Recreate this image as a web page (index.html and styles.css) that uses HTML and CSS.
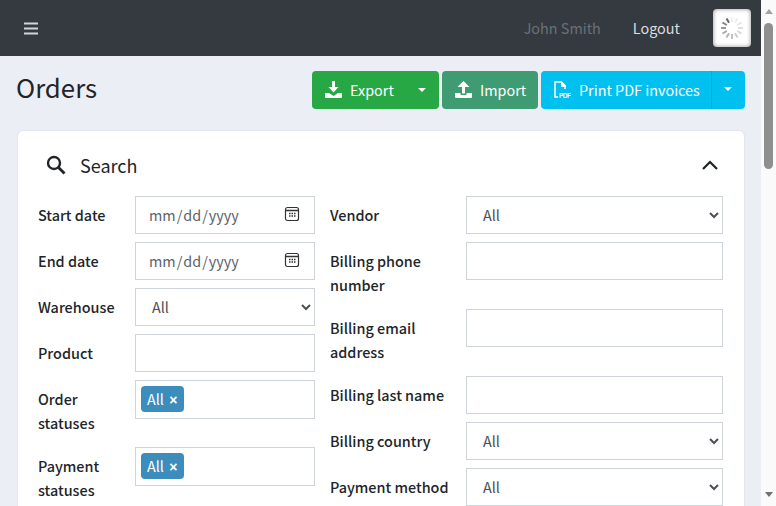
FILE: index.html
```html
<!DOCTYPE html>
<html lang="en">
<head>
    <meta charset="UTF-8">
    <meta name="viewport" content="width=device-width, initial-scale=1.0">
    <title>Orders</title>
    <link rel="stylesheet" href="styles.css">
</head>
<body>
    <div class="page">
        <nav class="navbar">
            <button class="nav-toggle" aria-label="Menu">
                <svg width="16" height="13" viewBox="0 0 16 13"><path d="M1 1.500h14M1 6.500h14M1 11.500h14" stroke="#d4d5d7" stroke-width="2"/></svg>
            </button>
            <span class="nav-user">John Smith</span>
            <a class="nav-logout" href="#">Logout</a>
            <div class="nav-spinner">
                <svg width="24" height="24" viewBox="0 0 24 24" stroke-width="2">
                    <line x1="12" y1="1" x2="12" y2="6" stroke="#f2f2f2"/>
                    <line x1="17.500" y1="2.500" x2="15" y2="6.800" stroke="#ededed"/>
                    <line x1="21.500" y1="6.500" x2="17.200" y2="9" stroke="#e6e6e6"/>
                    <line x1="23" y1="12" x2="18" y2="12" stroke="#dedede"/>
                    <line x1="21.500" y1="17.500" x2="17.200" y2="15" stroke="#d6d6d6"/>
                    <line x1="17.500" y1="21.500" x2="15" y2="17.200" stroke="#cccccc"/>
                    <line x1="12" y1="23" x2="12" y2="18" stroke="#c2c2c2"/>
                    <line x1="6.500" y1="21.500" x2="9" y2="17.200" stroke="#b5b5b5"/>
                    <line x1="2.500" y1="17.500" x2="6.800" y2="15" stroke="#a8a8a8"/>
                    <line x1="1" y1="12" x2="6" y2="12" stroke="#999999"/>
                    <line x1="2.500" y1="6.500" x2="6.800" y2="9" stroke="#808080"/>
                    <line x1="6.500" y1="2.500" x2="9" y2="6.800" stroke="#666666"/>
                </svg>
            </div>
        </nav>

        <main class="content">
            <div class="page-header">
                <h1>Orders</h1>
                <div class="page-actions">
                    <button class="btn btn-export">
                        <svg class="btn-icon" width="17" height="17" viewBox="0 0 17 17"><path fill="#fff" d="M7 0h3v6h3.500L8.500 11.500 3.500 6H7zM0 12h4l4.500 3 4.500-3h4v4a1 1 0 0 1-1 1H1a1 1 0 0 1-1-1z"/></svg>
                        Export
                        <span class="caret caret-export"></span>
                    </button>
                    <button class="btn btn-import">
                        <svg class="btn-icon" width="17" height="17" viewBox="0 0 17 17"><path fill="#fff" d="M8.500 0l6 6H10v6.500H7V6H2.500zM0 12h5.500v2h6v-2H17v4a1 1 0 0 1-1 1H1a1 1 0 0 1-1-1z"/></svg>
                        Import
                    </button>
                    <div class="btn-split">
                        <button class="btn btn-print">
                            <svg class="btn-icon" width="17" height="17" viewBox="0 0 17 17"><path fill="none" stroke="#fff" stroke-width="1.500" d="M1 10V1h6.500L11 4.500V8M1 10v6h3"/><path fill="#fff" d="M7 1h1l4 4v1H7z"/><text class="pdf-mark" x="5" y="16.500" textLength="12">PDF</text></svg>
                            Print PDF invoices
                        </button>
                        <button class="btn btn-print btn-print-caret" aria-label="More"><span class="caret"></span></button>
                    </div>
                </div>
            </div>

            <section class="card">
                <div class="card-head">
                    <svg width="20" height="20" viewBox="0 0 20 20"><circle cx="8" cy="8" r="6" fill="none" stroke="#212529" stroke-width="2.400"/><path d="M12.500 12.500l6 6" stroke="#212529" stroke-width="2.800"/></svg>
                    <h2>Search</h2>
                    <svg class="card-chevron" width="16" height="10" viewBox="0 0 16 10"><path d="M1 9l7-7 7 7" fill="none" stroke="#1d2124" stroke-width="2.200"/></svg>
                </div>
                <form class="search-form">
                    <div class="form-col">
                        <div class="form-row">
                            <label for="start-date">Start date</label>
                            <input type="date" id="start-date">
                        </div>
                        <div class="form-row">
                            <label for="end-date">End date</label>
                            <input type="date" id="end-date">
                        </div>
                        <div class="form-row">
                            <label for="warehouse">Warehouse</label>
                            <select id="warehouse"><option>All</option></select>
                        </div>
                        <div class="form-row">
                            <label for="product">Product</label>
                            <input type="text" id="product">
                        </div>
                        <div class="form-row">
                            <label>Order statuses</label>
                            <div class="tag-box"><span class="tag">All <b>×</b></span></div>
                        </div>
                        <div class="form-row">
                            <label>Payment statuses</label>
                            <div class="tag-box"><span class="tag">All <b>×</b></span></div>
                        </div>
                    </div>
                    <div class="form-col">
                        <div class="form-row">
                            <label for="vendor">Vendor</label>
                            <select id="vendor"><option>All</option></select>
                        </div>
                        <div class="form-row">
                            <label for="billing-phone">Billing phone number</label>
                            <input type="text" id="billing-phone">
                        </div>
                        <div class="form-row">
                            <label for="billing-email">Billing email address</label>
                            <input type="text" id="billing-email">
                        </div>
                        <div class="form-row">
                            <label for="billing-last">Billing last name</label>
                            <input type="text" id="billing-last">
                        </div>
                        <div class="form-row">
                            <label for="billing-country">Billing country</label>
                            <select id="billing-country"><option>All</option></select>
                        </div>
                        <div class="form-row">
                            <label for="payment-method">Payment method</label>
                            <select id="payment-method"><option>All</option></select>
                        </div>
                    </div>
                </form>
            </section>
        </main>
    </div>

    <div class="scrollbar">
        <span class="scroll-up"></span>
        <span class="scroll-thumb"></span>
        <span class="scroll-down"></span>
    </div>
</body>
</html>
```
FILE: styles.css
```css
body {
    display: flex;
    height: 100vh;
    margin: 0;
    overflow: hidden;
    background-color: #ebeef4;
    color: #212529;
    font-family: "Noto Sans CJK SC", "Noto Sans", sans-serif;
    font-size: 14.4px;
    line-height: 24px;
}
.page {
    flex: 1;
    min-width: 0;
    overflow: hidden;
}
.scrollbar {
    display: flex;
    flex: none;
    flex-direction: column;
    align-items: center;
    width: 15px;
    background-color: #fafafa;
}
.scroll-up,
.scroll-down {
    width: 0;
    height: 0;
    border-left: 4px solid transparent;
    border-right: 4px solid transparent;
}
.scroll-up {
    margin-top: 9px;
    border-bottom: 5px solid #a3a3a3;
}
.scroll-down {
    margin-top: auto;
    margin-bottom: 9px;
    border-top: 5px solid #707070;
}
.scroll-thumb {
    width: 9px;
    height: 146px;
    margin-top: 9px;
    border-radius: 5px;
    background-color: #8f8f8f;
}
.navbar {
    display: flex;
    align-items: center;
    height: 56px;
    padding: 0 10px 0 23px;
    background-color: #343a40;
}
.nav-toggle {
    display: flex;
    margin-right: auto;
    padding: 0;
    border: none;
    background: none;
}
.nav-user {
    margin-right: 32px;
    color: #6b7076;
}
.nav-logout {
    margin-right: 33px;
    color: #dcdddf;
    text-decoration: none;
}
.nav-spinner {
    display: flex;
    align-items: center;
    justify-content: center;
    width: 38px;
    height: 38px;
    border-radius: 4px;
    background-color: #fff;
    box-shadow: inset 0 0 4px rgba(0, 0, 0, 0.45);
}
.content {
    padding: 15px 17px 40px 16px;
}
.page-header {
    display: flex;
    justify-content: space-between;
    align-items: flex-start;
    margin-right: -1px;
    margin-bottom: 22px;
}
.page-header h1 {
    margin: 0;
    font-size: 25.800px;
    font-weight: 400;
    line-height: 32px;
}
.page-actions {
    display: flex;
    gap: 3px;
}
.btn {
    display: flex;
    align-items: center;
    height: 38px;
    padding: 0 13px 1px;
    border: none;
    border-radius: 4px;
    color: #fff;
    font-family: inherit;
    font-size: 14.4px;
    white-space: nowrap;
}
.btn-icon {
    flex: none;
    margin-right: 8px;
}
.btn-export {
    width: 127px;
    background-color: #28a745;
}
.btn-import {
    width: 96px;
    background-color: #3f9b72;
}
.btn-print {
    background-color: #00c0ef;
}
.btn-split {
    display: flex;
}
.btn-split .btn-print:first-child {
    width: 170px;
    border-radius: 4px 0 0 4px;
}
.btn-print-caret {
    width: 34px;
    justify-content: center;
    padding: 0 1px 2px 0;
    border-left: 1px solid #00acd7;
    border-radius: 0 4px 4px 0;
}
.caret {
    width: 0;
    height: 0;
    border-top: 4px solid #fff;
    border-left: 4px solid transparent;
    border-right: 4px solid transparent;
}
.caret-export {
    margin-left: auto;
}
.pdf-mark {
    fill: #fff;
    font-family: "Liberation Sans", sans-serif;
    font-size: 6.500px;
    font-weight: 700;
}
.card {
    margin-left: 2px;
    padding: 0 21px 20px 20px;
    border-radius: 5px;
    background-color: #fff;
    box-shadow: 0 0 2px rgba(0, 0, 0, 0.12);
}
.card-head {
    display: flex;
    align-items: center;
    height: 65px;
    padding-top: 3px;
    box-sizing: border-box;
    padding-left: 8px;
}
.card-head h2 {
    margin: 0 0 0 14px;
    font-size: 18px;
    font-weight: 400;
}
.card-chevron {
    margin-left: auto;
    margin-right: 5px;
}
.search-form {
    display: grid;
    grid-template-columns: 277px 393px;
    column-gap: 15px;
}
.form-row {
    display: flex;
    margin-bottom: 8px;
}
.form-row label {
    flex: none;
    width: 97px;
    padding: 7px 0 4px;
    font-weight: 500;
}
.form-col:last-child label {
    width: 136px;
}
.form-row input,
.form-row select,
.tag-box {
    flex: 1;
    min-width: 0;
    height: 38px;
    box-sizing: border-box;
    padding: 5px 12px 7px;
    border: 1px solid #ced4da;
    background-color: #fff;
    color: #495057;
    font-family: inherit;
    font-size: 14.4px;
}
.form-row input[type="date"] {
    color: #5b636b;
}
.form-row input::-webkit-calendar-picker-indicator {
    width: 16px;
    height: 16px;
    padding: 0;
    margin-right: 2px;
    background: url("data:image/svg+xml,%3Csvg xmlns='http://www.w3.org/2000/svg' width='16' height='16' viewBox='0 0 16 16'%3E%3Crect x='1.500' y='1.500' width='13' height='13' rx='2' fill='none' stroke='%23333' stroke-width='1.200'/%3E%3Cpath d='M2 4.500h12' stroke='%23333' stroke-width='1.500'/%3E%3Cpath d='M5 7.500h1.500M7.500 7.500H9M10 7.500h1.500M5 10h1.500M7.500 10H9M10 10h1.500' stroke='%23333' stroke-width='1.500'/%3E%3C/svg%3E") no-repeat center;
}
.tag-box {
    height: 39px;
    padding: 5px;
}
.tag {
    display: inline-block;
    height: 26px;
    padding: 0 7px 0 6px;
    border-radius: 4px;
    background-color: #3c8dbc;
    color: #fff;
    line-height: 26px;
}
.tag b {
    margin-left: 2px;
    font-family: "Liberation Sans", sans-serif;
    font-size: 14px;
}
```
